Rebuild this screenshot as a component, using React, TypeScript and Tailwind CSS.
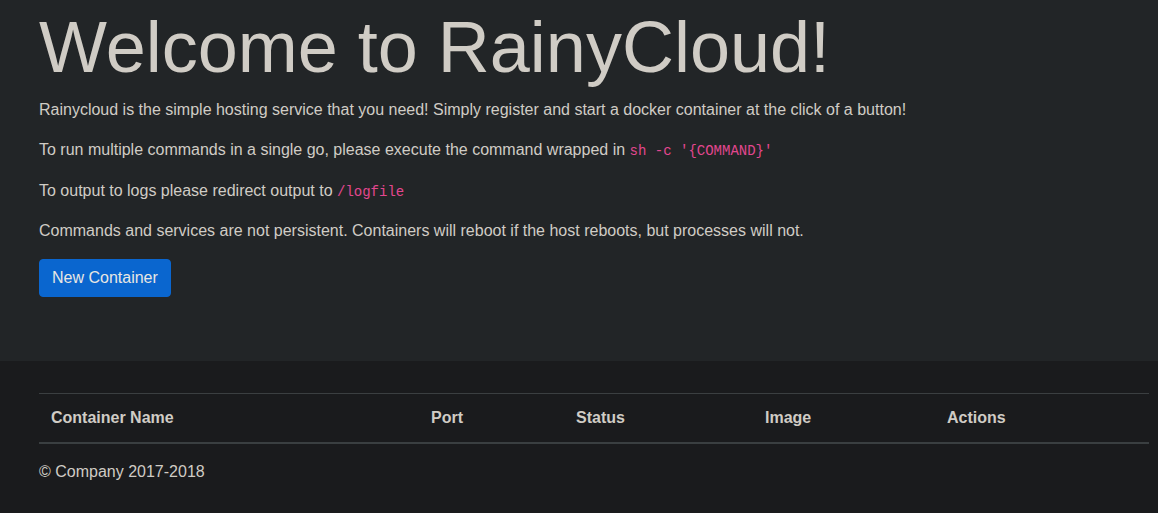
import React from "react";

export default function App() {
  const font = { fontFamily: '"Liberation Sans", Arial, sans-serif' };
  return (
    <div className="min-h-[513px] bg-[#1a1b1d] text-[#d0ccc5] text-[16px] leading-[24px]" style={font}>
      <div className="bg-[#222527] pt-[4px] pb-[64px] mb-[32px]">
        <div className="ml-[39px] w-[1110px]">
          <h1 className="text-[72px] leading-[86.4px] font-light mb-[8px] text-[#d0ccc5]">Welcome to RainyCloud!</h1>
          <p className="mb-[16px] h-[24px]">Rainycloud is the simple hosting service that you need! Simply register and start a docker container at the click of a button!</p>
          <p className="mb-[17px] h-[24px]">
            To run multiple commands in a single go, please execute the command wrapped in{" "}
            <code className="text-[14px] leading-none text-[#e3478f] font-['Liberation_Mono',monospace]">sh -c '{"{COMMAND}"}'</code>
          </p>
          <p className="mb-[16px] h-[24px]">
            To output to logs please redirect output to{" "}
            <code className="text-[14px] leading-none text-[#e3478f] font-['Liberation_Mono',monospace]">/logfile</code>
          </p>
          <p className="mb-[16px] h-[24px]">Commands and services are not persistent. Containers will reboot if the host reboots, but processes will not.</p>
          <button className="block h-[38px] px-[12px] border border-[#0a66cf] bg-[#0a66cf] text-[#e8e6e3] rounded-[4px]">New Container</button>
        </div>
      </div>
      <div className="ml-[39px] w-[1110px]">
        <table className="w-[1110px] border-collapse table-fixed mb-[16px]">
          <thead>
            <tr className="border-t border-[#3b3f41] border-b-2 border-b-[#3a3f41]">
              <th className="w-[380px] text-left font-bold p-[12px]">Container Name</th>
              <th className="w-[145px] text-left font-bold p-[12px]">Port</th>
              <th className="w-[189px] text-left font-bold p-[12px]">Status</th>
              <th className="w-[182px] text-left font-bold p-[12px]">Image</th>
              <th className="w-[214px] text-left font-bold p-[12px]">Actions</th>
            </tr>
          </thead>
          <tbody></tbody>
        </table>
        <footer>
          <p className="mb-[16px]">© Company 2017-2018</p>
        </footer>
      </div>
    </div>
  );
}
